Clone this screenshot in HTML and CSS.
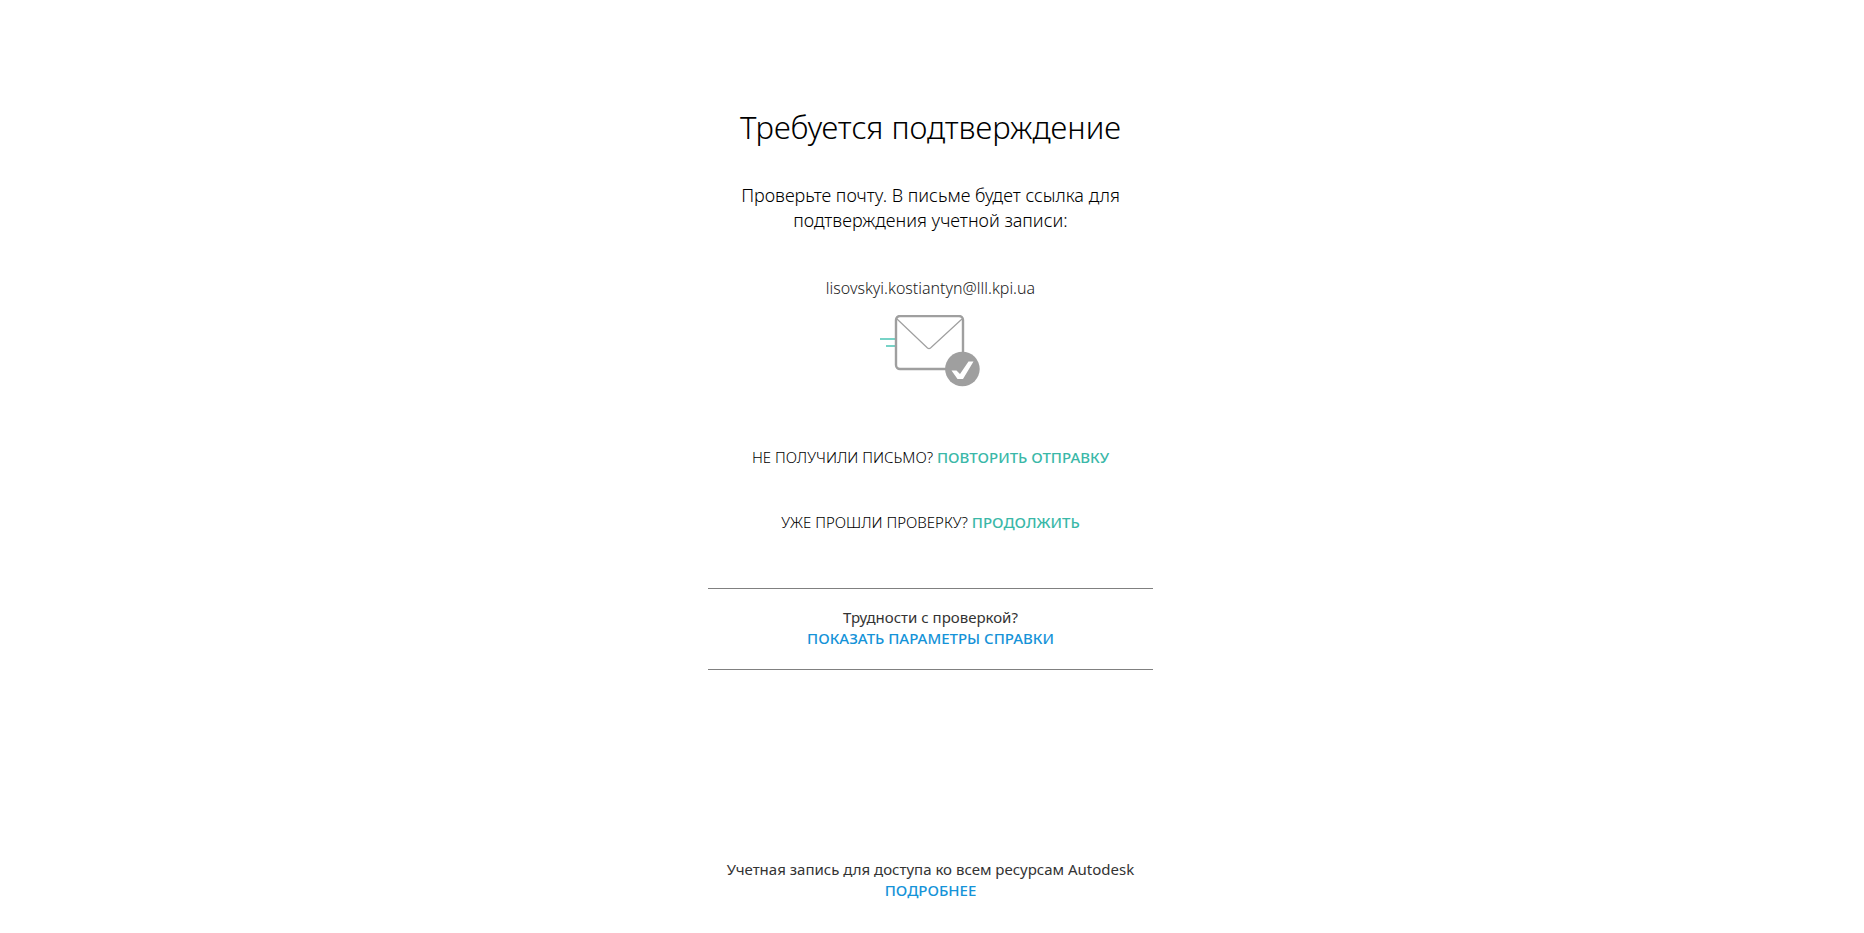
FILE: index.html
```html
<!DOCTYPE html>
<html lang="ru">
<head>
<meta charset="utf-8">
<title>Требуется подтверждение</title>
<link rel="stylesheet" href="styles.css">
</head>
<body>
<main class="page">
  <h1 class="title">Требуется подтверждение</h1>
  <p class="lead">Проверьте почту. В письме будет ссылка для подтверждения учетной записи:</p>
  <p class="email">lisovskyi.kostiantyn@lll.kpi.ua</p>
  <svg class="mail-icon" width="101" height="72" viewBox="0 0 101 72" fill="none" aria-hidden="true">
    <path d="M0 24H15M6 31H15" stroke="#4bc5b5" stroke-width="1.3"/>
    <rect x="16" y="1" width="67" height="53" rx="4" stroke="#9f9f9f" stroke-width="2.4"/>
    <path d="M17 4L47.5 33Q49 34.3 50.5 33L82 4" stroke="#9f9f9f" stroke-width="1.2"/>
    <circle cx="82.4" cy="54" r="17.3" fill="#9f9f9f"/>
    <path d="M71.5 55.5H76.5L80 59L88.5 46.5H93.5L83 64H77.5Z" fill="#fff"/>
  </svg>
  <p class="action">НЕ ПОЛУЧИЛИ ПИСЬМО? <a class="link" href="#">ПОВТОРИТЬ ОТПРАВКУ</a></p>
  <p class="action">УЖЕ ПРОШЛИ ПРОВЕРКУ? <a class="link" href="#">ПРОДОЛЖИТЬ</a></p>
  <section class="help">
    <p class="text">Трудности с проверкой?</p>
    <a class="link link-blue" href="#">ПОКАЗАТЬ ПАРАМЕТРЫ СПРАВКИ</a>
  </section>
  <footer class="footer">
    <p class="text">Учетная запись для доступа ко всем ресурсам Autodesk</p>
    <a class="link link-blue" href="#">ПОДРОБНЕЕ</a>
  </footer>
</main>
</body>
</html>
```
FILE: styles.css
```css
body {
  margin: 0;
  padding-right: 3px;
  background: #fff;
  color: #000;
  font: 300 15px/21px "Noto Sans", "Open Sans", sans-serif;
}

h1, p {
  margin: 0;
}

.page {
  display: flex;
  flex-direction: column;
  align-items: center;
  box-sizing: border-box;
  max-width: 445px;
  margin: 0 auto;
  padding-top: 107px;
  text-align: center;
}

.title {
  font-size: 31px;
  font-weight: 300;
  line-height: 40px;
}

.lead {
  max-width: 400px;
  margin-top: 36px;
  font-size: 18px;
  line-height: 25px;
}

.email {
  margin-top: 45px;
  color: #222;
  font-size: 16px;
}

.mail-icon {
  margin-top: 16px;
}

.action {
  margin-top: 60px;
}

.action + .action {
  margin-top: 44px;
}

.link {
  color: #3ab8a8;
  font-weight: 500;
  text-decoration: none;
}

.link-blue {
  color: #1593d8;
}

.text {
  font-weight: 400;
  color: #333;
}

.help {
  align-self: stretch;
  margin-top: 55px;
  padding: 18px 0 20px;
  border: solid #808080;
  border-width: 1px 0;
}

.footer {
  margin-top: 189px;
}
```
